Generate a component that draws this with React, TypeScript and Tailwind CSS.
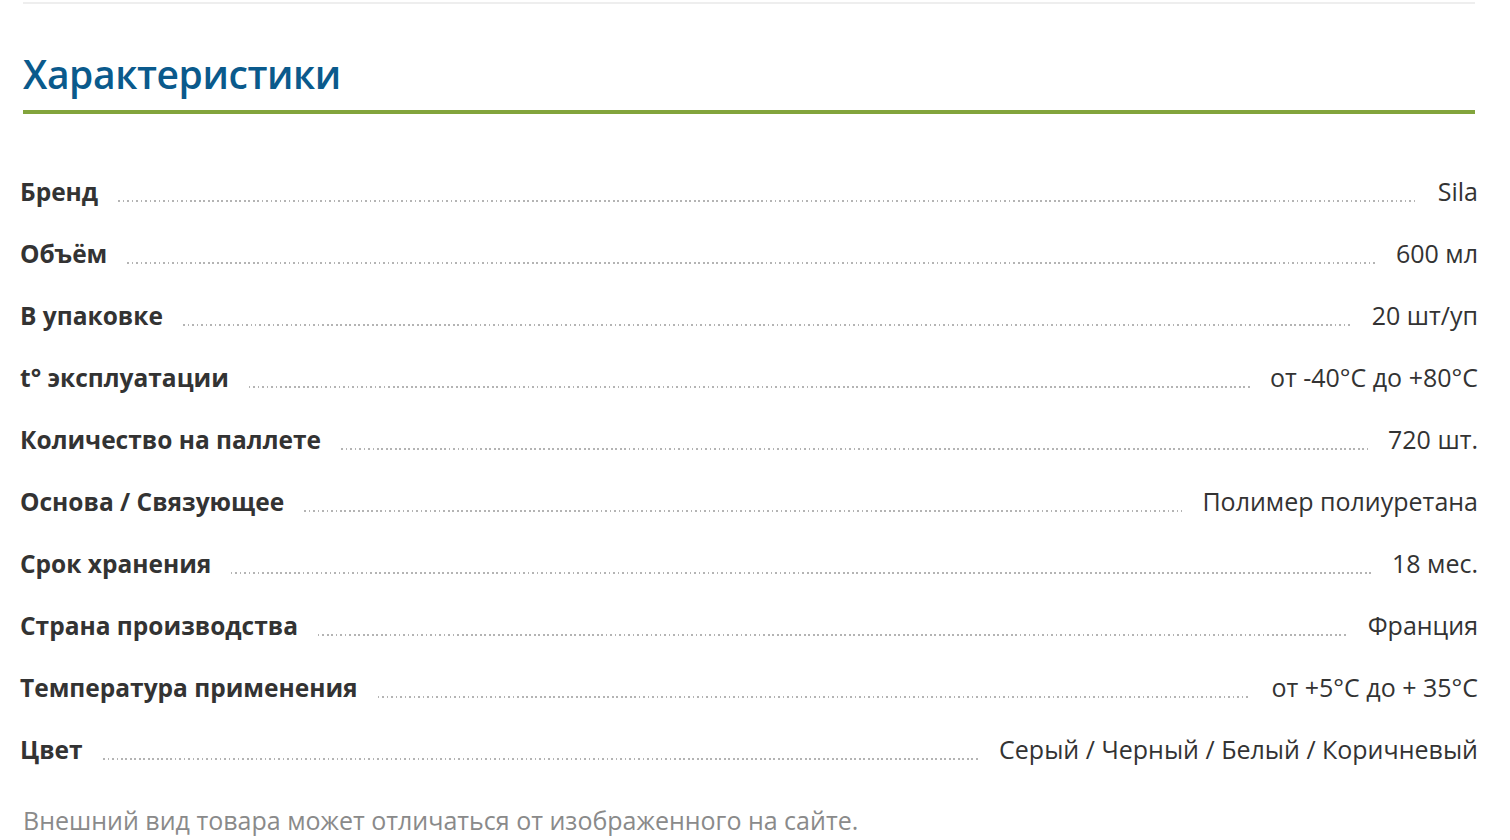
import React from 'react';

interface Spec {
  label: string;
  value: string;
}

const specs: Spec[] = [
  { label: 'Бренд', value: 'Sila' },
  { label: 'Объём', value: '600 мл' },
  { label: 'В упаковке', value: '20 шт/уп' },
  { label: 't° эксплуатации', value: 'от -40°C до +80°C' },
  { label: 'Количество на паллете', value: '720 шт.' },
  { label: 'Основа / Связующее', value: 'Полимер полиуретана' },
  { label: 'Срок хранения', value: '18 мес.' },
  { label: 'Страна производства', value: 'Франция' },
  { label: 'Температура применения', value: 'от +5°C до + 35°C' },
  { label: 'Цвет', value: 'Серый / Черный / Белый / Коричневый' },
];

const App: React.FC = () => {
  return (
    <div className="min-h-screen bg-white text-[#333] font-['Open_Sans',sans-serif]">
      {/* Section header */}
      <div className="pl-[23px] pr-[35px] pt-[2px]">
        <div className="h-[2px] bg-[#eeeeee]" />
        <h2 className="mt-[50px] pb-[16px] border-b-4 border-[#82a43c] text-[39px] leading-[40px] tracking-[-0.4px] font-semibold text-[#0a5a8c]">
          Характеристики
        </h2>
      </div>

      {/* Spec rows */}
      <div className="pl-[20px] pr-[32px] pt-[46px]">
        {specs.map((spec) => (
          <div key={spec.label} className="flex items-baseline h-[62px] leading-[62px]">
            <span className="font-bold text-[24.5px] whitespace-nowrap">{spec.label}</span>
            <div className="flex-1 mx-5 h-[2px] translate-y-[1px] bg-[repeating-linear-gradient(to_right,#b4b4b4_0_1.5px,transparent_1.5px_4.5px)]" />
            <span className="text-[25px] whitespace-nowrap">{spec.value}</span>
          </div>
        ))}
      </div>

      <p className="px-[23px] mt-[24px] text-[25px] leading-[32px] text-[#8a8a8a]">
        Внешний вид товара может отличаться от изображенного на сайте.
      </p>
    </div>
  );
};

export default App;
